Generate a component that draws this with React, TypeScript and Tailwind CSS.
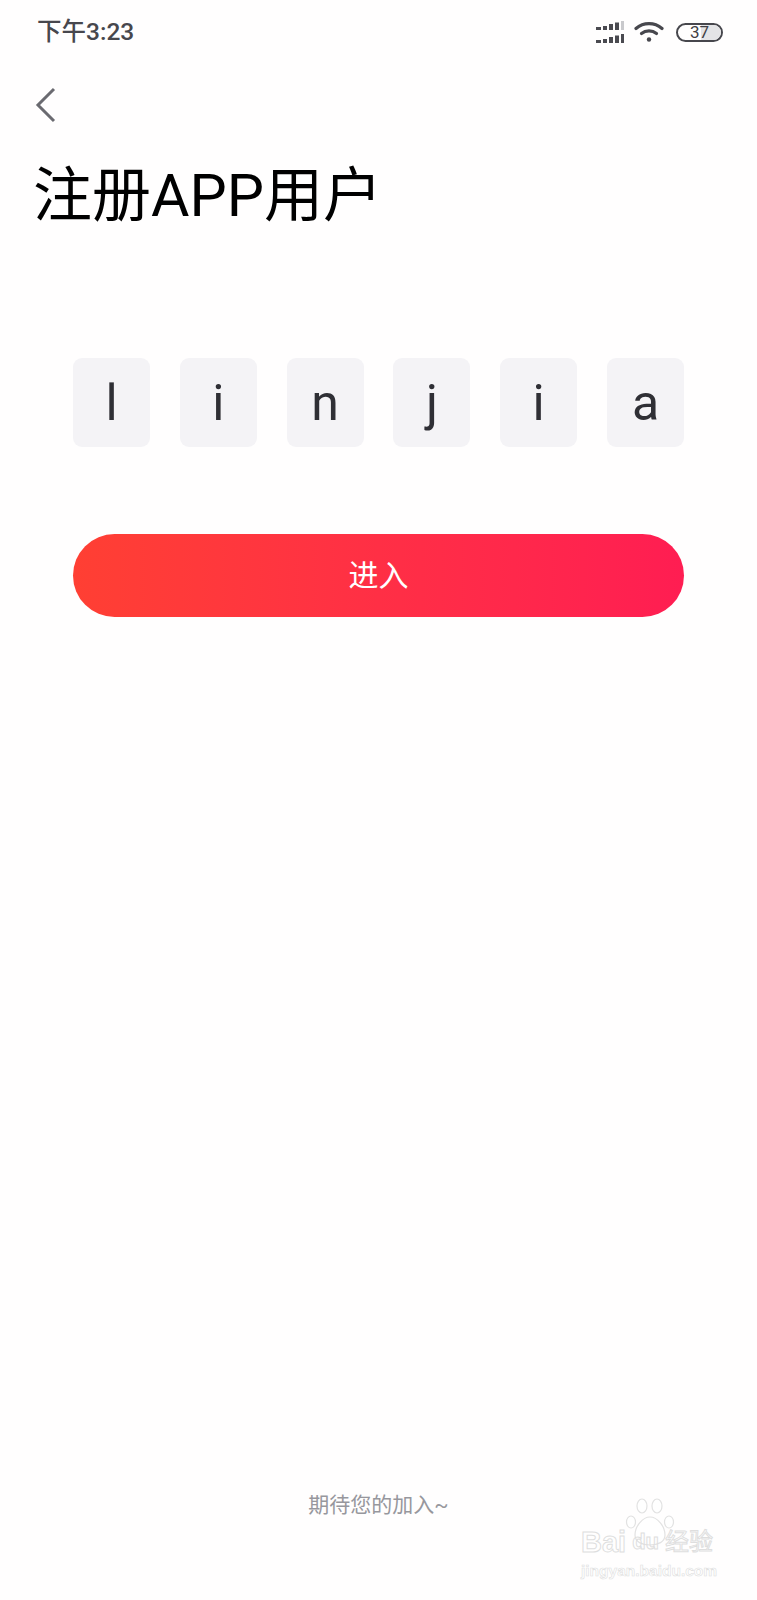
const letters = ["l", "i", "n", "j", "i", "a"];
const cjk = "font-['Roboto','Noto_Sans_CJK_SC',sans-serif]";

function SignalBars({ last }: { last: string }) {
  return (
    <svg width="28" height="9" viewBox="0 0 28 9">
      <rect x="0" y="6" width="5" height="3" fill="#4a4a50" />
      <rect x="7" y="5" width="4" height="4" fill="#4a4a50" />
      <rect x="13" y="3" width="4" height="6" fill="#4a4a50" />
      <rect x="19" y="1.5" width="4" height="7.5" fill="#4a4a50" />
      <rect x="25" y="0" width="3" height="9" fill={last} />
    </svg>
  );
}

function StatusBar() {
  return (
    <div className={`flex h-[64px] items-center justify-between pl-[37px] pr-[34px] ${cjk}`}>
      <span className="text-[24.5px] font-medium leading-none text-[#47474d]">下午3:23</span>
      <div className="flex items-center">
        <div className="flex flex-col gap-[4px]">
          <SignalBars last="#c9c9cc" />
          <SignalBars last="#4a4a50" />
        </div>
        <svg className="ml-[10px]" width="30" height="22" viewBox="0 0 30 22" fill="none" stroke="#47474d" strokeWidth="3.2" strokeLinecap="round">
          <path d="M2 7.5C9.5 1 20.500 1 28 7.500" />
          <path d="M7.500 12.500C11.800 9 18.200 9 22.500 12.500" />
          <circle cx="15" cy="18.500" r="2.200" fill="#47474d" stroke="none" />
        </svg>
        <div className="relative ml-[12px] flex h-[19px] w-[47px] items-center justify-center overflow-hidden rounded-full border-2 border-[#47474d]">
          <div className="absolute inset-y-0 right-0 w-[20px] bg-[#e4e4e6]" />
          <span className="relative text-[17px] leading-none text-[#3f3f45]">37</span>
        </div>
      </div>
    </div>
  );
}

function Watermark() {
  return (
    <div className="absolute bottom-[22px] left-[581px] w-[138px] select-none font-['Liberation_Sans','Noto_Sans_CJK_SC',sans-serif]">
      <svg className="absolute left-[44px] top-[-30px]" width="50" height="50" viewBox="0 0 50 50" fill="#ffffff" stroke="#e2e2e2" strokeWidth="1.200">
        <ellipse cx="6" cy="24" rx="4.500" ry="6" />
        <ellipse cx="17" cy="8" rx="5" ry="7" />
        <ellipse cx="32" cy="8" rx="5" ry="7" />
        <ellipse cx="44" cy="24" rx="4.500" ry="6" />
        <path d="M25 19c-7 0-15 9-15 18 0 7 7 10 15 10s15-3 15-10c0-9-8-18-15-18z" />
      </svg>
      <div className="relative flex items-center text-[29px] font-bold leading-none text-transparent [-webkit-text-stroke:1px_#dedede]">
        <span>Bai</span>
        <span className="ml-[6px] text-[22px]">du</span>
        <span className="ml-[6px] text-[24px] font-normal">经验</span>
      </div>
      <div className="mt-[6px] text-[15.5px] font-bold leading-none text-transparent [-webkit-text-stroke:0.6px_#dedede]">
        jingyan.baidu.com
      </div>
    </div>
  );
}

export default function App() {
  return (
    <div className={`relative flex h-[1600px] w-[757px] flex-col bg-[#fffefe] ${cjk}`}>
      <StatusBar />

      <svg className="ml-[35px] mt-[23px]" width="22" height="36" viewBox="0 0 22 36" fill="none" stroke="#6a6a70" strokeWidth="3">
        <path d="M19 2L3 18l16 16" />
      </svg>

      <h1 className="ml-[33px] mt-[39px] text-[59px] font-normal leading-[68px] text-black">注册APP用户</h1>

      <div className="mx-[73px] mt-[128px] flex justify-between">
        {letters.map((c, i) => (
          <div key={i} className="flex h-[89px] w-[77px] items-center justify-center rounded-[9px] bg-[#f4f3f6] text-[50px] leading-none text-[#2f2f35]">
            {c}
          </div>
        ))}
      </div>

      <button className="mx-[73px] mt-[87px] flex h-[83px] items-center justify-center rounded-full bg-gradient-to-r from-[#ff3f33] via-[#ff2f45] to-[#ff1d52] text-[30px] leading-none text-white">
        进入
      </button>

      <p className="mb-[82px] mt-auto text-center text-[21px] leading-[26px] text-[#97979d]">期待您的加入~</p>

      <Watermark />
    </div>
  );
}
